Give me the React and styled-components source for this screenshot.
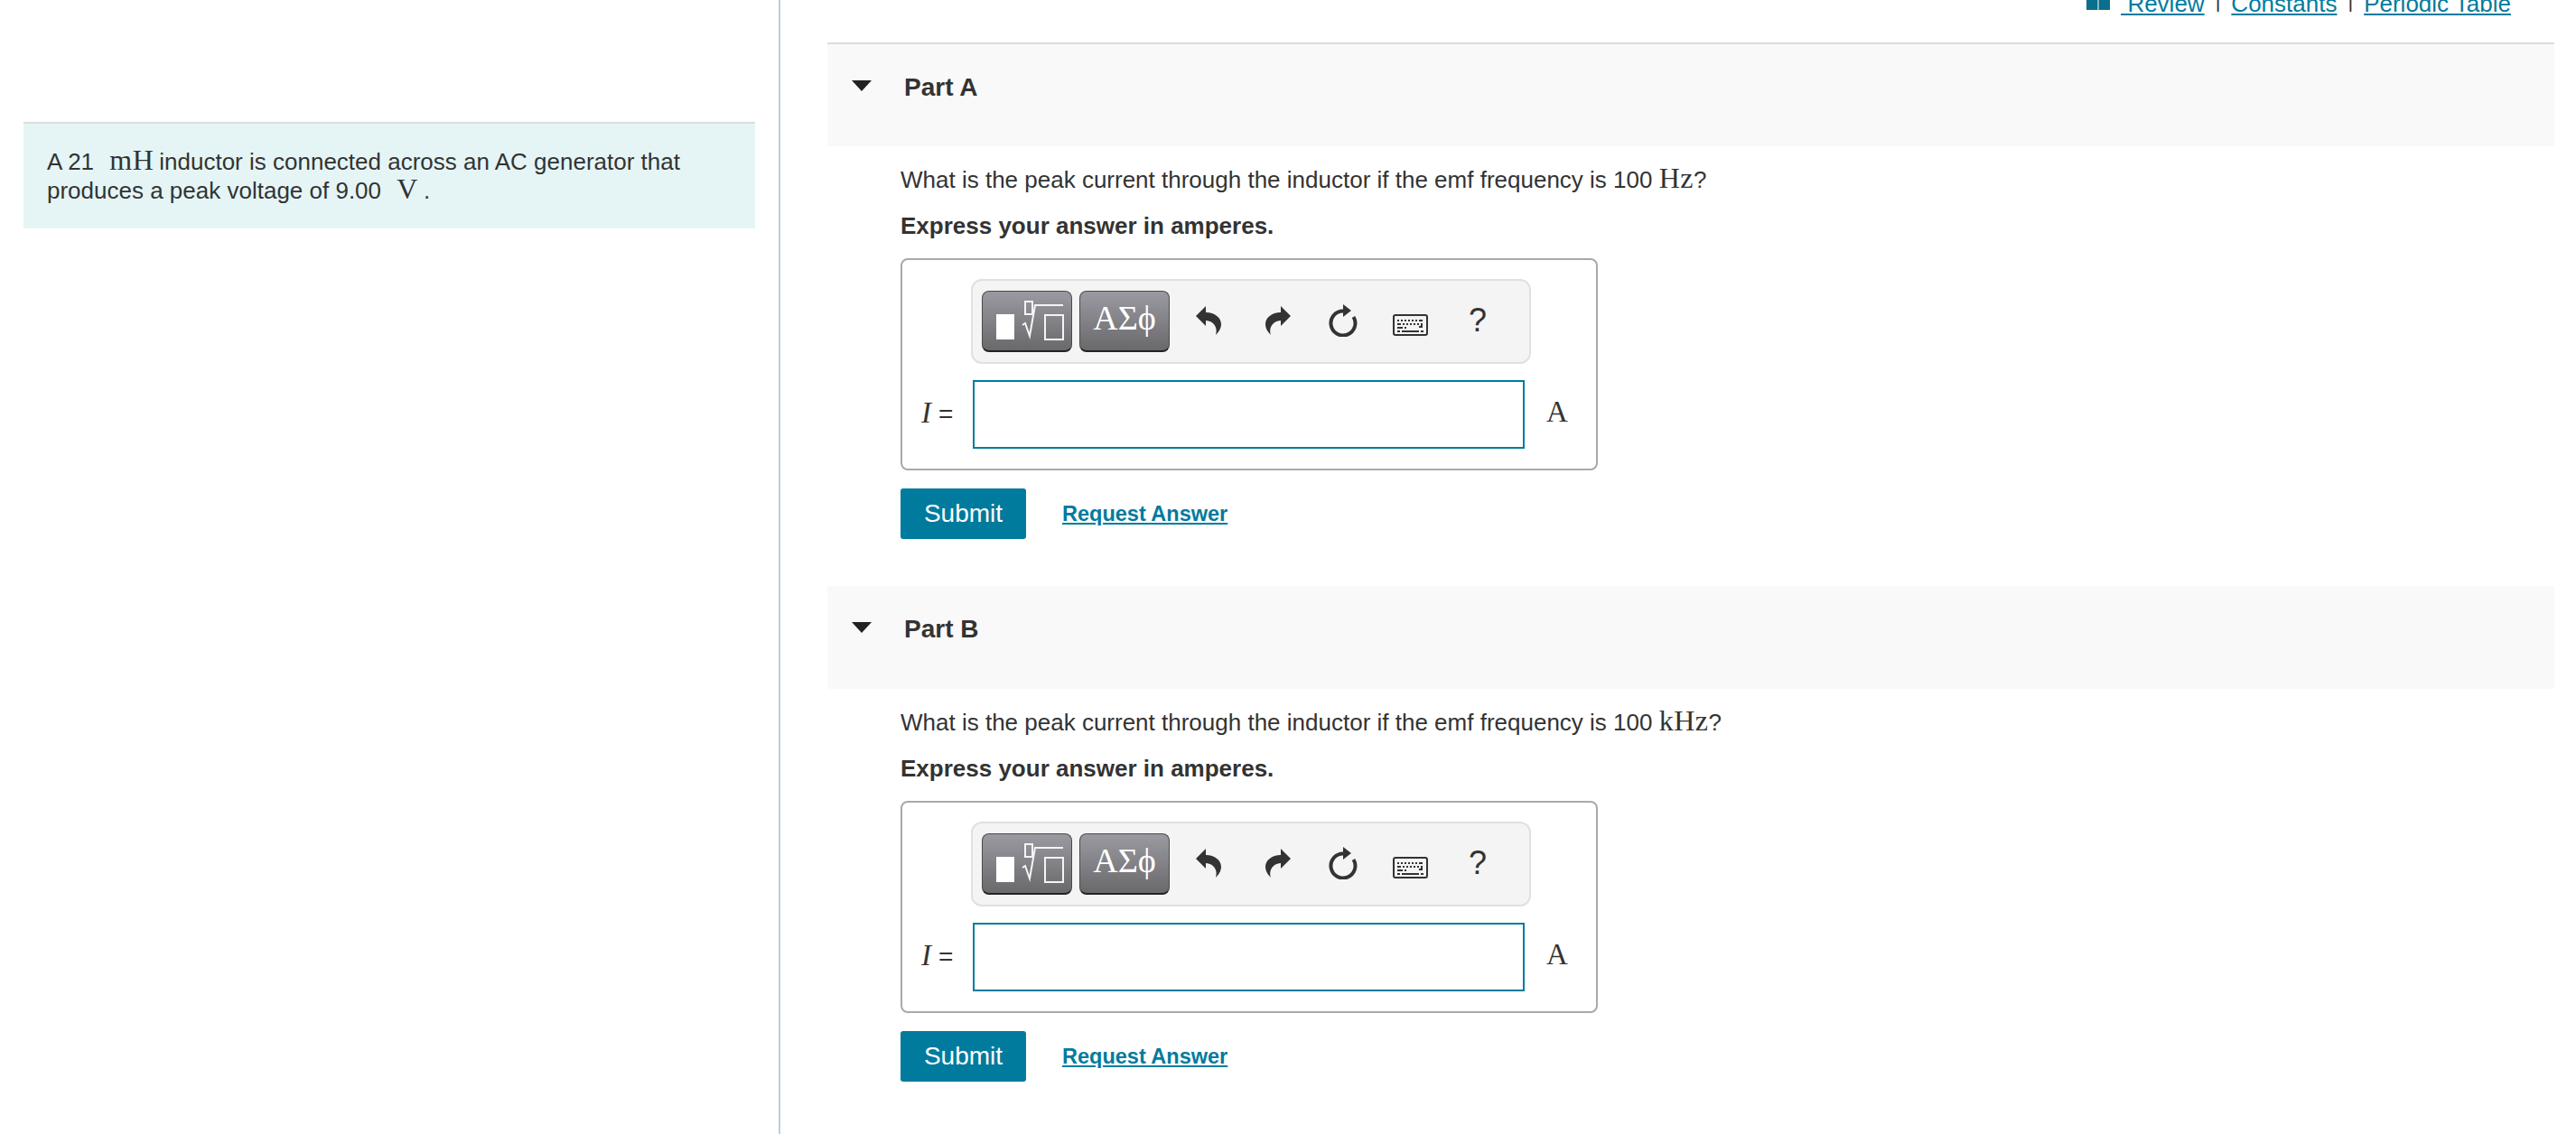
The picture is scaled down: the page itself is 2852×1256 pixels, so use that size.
import React from 'react'
import styled, { createGlobalStyle } from 'styled-components'

const teal = '#007b9e'

const Global = createGlobalStyle`
 html, body {
  margin: 0;
  height: 1256px;
  overflow: hidden;
  background: #fff;
 }
 body {
  font-family: 'Liberation Sans', Arial, sans-serif;
  color: #333;
  font-size: 26px;
 }
`

const Page = styled.div`
 display: flex;
 height: 1276px;
 margin-top: -20px;
`

const Side = styled.aside`
 flex: none;
 width: 864px;
 box-sizing: border-box;
 border-right: 2px solid #b9cfe4;
 padding: 155px 26px 0;
`

const Intro = styled.div`
 background: #e5f5f6;
 border-top: 2px solid #dddddd;
 padding: 26px 26px 0;
 line-height: 32px;
 height: 118px;
 box-sizing: border-box;
`

const Math = styled.span`
 font-family: 'Liberation Serif', 'DejaVu Serif', serif;
 font-size: 32px;
 line-height: 0;
 letter-spacing: 0.5px;
 margin: ${p => p.$spaced ? '0 6px 0 10px' : '0'};
`

const Main = styled.main`
 flex: 1;
 padding: 0 24px 0 52px;
 min-width: 0;
`

const TopLinks = styled.nav`
 display: flex;
 justify-content: flex-end;
 align-items: center;
 height: 48px;
 padding-right: 48px;
 gap: 12px;
 margin-bottom: 19px;
 line-height: 30px;
`

const TopLink = styled.a`
 color: ${teal};
 text-decoration: underline;
 white-space: pre;
`

const Sep = styled.span`
 font-size: 22px;
 padding-bottom: 6px;
`

const PartHeader = styled.div`
 background: #f9f9f9;
 border-top: ${p => p.$first ? '2px solid #dddddd' : 'none'};
 height: ${p => p.$first ? 115 : 114}px;
 display: flex;
 align-items: flex-start;
 padding: 32px 0 0 27px;
 box-sizing: border-box;
 font-weight: 700;
 font-size: 28px;
`

const Caret = styled.span`
 width: 0;
 height: 0;
 border-left: 11px solid transparent;
 border-right: 11px solid transparent;
 border-top: 12px solid #222;
 margin: 8px 36px 0 0;
`

const PartBody = styled.section`
 padding: 21px 0 52px 81px;
`

const Question = styled.p`
 margin: 0;
 line-height: 32px;
`

const Hint = styled.p`
 margin: 19px 0 0;
 line-height: 32px;
 font-weight: 700;
`

const AnswerBox = styled.div`
 margin-top: 20px;
 width: 772px;
 height: 235px;
 box-sizing: border-box;
 border: 2px solid #a9a9a9;
 border-radius: 8px;
 padding: 21px 0 0 76px;
`

const Toolbar = styled.div`
 width: 620px;
 height: 94px;
 box-sizing: border-box;
 background: #f4f4f4;
 border: 2px solid #e0e0e0;
 border-radius: 12px;
 display: flex;
 align-items: center;
 padding-left: 10px;
`

const ToolButton = styled.button`
 width: 100px;
 height: 68px;
 padding: 0 0 8px;
 margin-right: 8px;
 border: 1px solid #4a4a4a;
 border-bottom: 2px solid #222;
 border-radius: 8px;
 background: linear-gradient(#9b9aa2, #69696b);
 color: #fff;
 display: flex;
 align-items: center;
 justify-content: center;
 font-family: 'Liberation Serif', serif;
 font-size: 38px;
`

const GlyphButton = styled(ToolButton)`
 padding: 0;
`

const ToolIcon = styled.span`
 display: flex;
 align-items: center;
 justify-content: center;
 width: ${p => p.$w}px;
 margin-left: ${p => p.$ml}px;
 margin-top: ${p => p.$dy || 0}px;
 color: #333;
 font-size: 36px;
 line-height: 1;
`

const InputRow = styled.div`
 display: flex;
 align-items: center;
 margin-top: 18px;
 margin-left: -76px;
`

const Label = styled.span`
 width: 78px;
 padding: 0 0 4px 21px;
 box-sizing: border-box;
 white-space: nowrap;
 font-size: 28px;
`

const Italic = styled.i`
 font-family: 'Liberation Serif', serif;
 font-size: 33px;
 margin-right: 8px;
`

const Field = styled.input`
 width: 611px;
 height: 76px;
 box-sizing: border-box;
 border: 2px solid ${teal};
 background: #fff;
 border-radius: 0;
 outline: none;
`

const Unit = styled.span`
 font-family: 'Liberation Serif', serif;
 font-size: 33px;
 margin-left: 24px;
 padding-bottom: 6px;
`

const Actions = styled.div`
 display: flex;
 align-items: center;
 margin-top: 20px;
`

const Submit = styled.button`
 width: 139px;
 height: 56px;
 border: none;
 border-radius: 3px;
 background: ${teal};
 color: #fff;
 font-family: inherit;
 font-size: 28px;
 padding: 0;
`

const RequestLink = styled.a`
 margin-left: 40px;
 color: ${teal};
 font-weight: 700;
 font-size: 23.5px;
 text-decoration: underline;
`

const Book = () => (
 <svg width="26" height="16" viewBox="0 0 26 16">
  <path d="M0 0h12.500v15H0zM13.500 0H26v15H13.500z" fill="#0a6f8c" />
 </svg>
)

const TemplatesGlyph = () => (
 <svg width="98" height="65" viewBox="1 1 98 65" fill="none" stroke="#f4f4f4" strokeWidth="2">
  <rect x="16" y="26" width="20" height="28" fill="#fff" stroke="none" />
  <rect x="48" y="12" width="8" height="14" />
  <path d="M45 38l3-2 5 14 6-34h31" />
  <rect x="70" y="27" width="20" height="27" />
 </svg>
)

const Undo = ({ flip }) => (
 <svg width="28" height="32" viewBox="0 0 28 32" style={flip ? { transform: 'scaleX(-1)' } : undefined}>
  <path d="M0 11L11 0v7c10 0 17 6 17 13 0 5-3 9-6 12 2-6 0-15-11-16v6z" fill="#333" />
 </svg>
)

const Reset = () => (
 <svg width="32" height="36" viewBox="0 0 32 36" fill="none">
  <path d="M16 7.500A13.500 13.500 0 1 0 27.500 14" stroke="#333" strokeWidth="4" />
  <path d="M16 0l9 7-9 7z" fill="#333" />
 </svg>
)

const Keyboard = () => (
 <svg width="39" height="24" viewBox="0 0 39 24">
  <rect x="1" y="1" width="37" height="22" rx="2" fill="#f4f4f4" stroke="#333" strokeWidth="2" />
  <path d="M5 6h2v2H5zM9 6h2v2H9zM13 6h2v2h-2zM17 6h2v2h-2zM21 6h2v2h-2zM25 6h2v2h-2zM29 6h4v2h-4zM5 10h4v2H5zM11 10h2v2h-2zM15 10h2v2h-2zM19 10h2v2h-2zM23 10h2v2h-2zM27 10h2v2h-2zM31 10h2v5h-4v-2h2zM5 14h6v2H5zM13 14h2v2h-2zM5 18h3v2H5zM10 18h19v2H10zM31 18h3v2h-3z" fill="#333" />
 </svg>
)

function Part({ name, first, unit }) {
 return (
  <>
   <PartHeader $first={first}>
    <Caret />
    {name}
   </PartHeader>
   <PartBody>
    <Question>
     What is the peak current through the inductor if the emf frequency is 100 <Math>{unit}</Math>?
    </Question>
    <Hint>Express your answer in amperes.</Hint>
    <AnswerBox>
     <Toolbar>
      <GlyphButton aria-label="templates"><TemplatesGlyph /></GlyphButton>
      <ToolButton>ΑΣϕ</ToolButton>
      <ToolIcon $w={28} $ml={21} $dy={-2}><Undo /></ToolIcon>
      <ToolIcon $w={28} $ml={49} $dy={-2}><Undo flip /></ToolIcon>
      <ToolIcon $w={32} $ml={42} $dy={-2}><Reset /></ToolIcon>
      <ToolIcon $w={39} $ml={39} $dy={8}><Keyboard /></ToolIcon>
      <ToolIcon $w={18} $ml={46} $dy={-3}>?</ToolIcon>
     </Toolbar>
     <InputRow>
      <Label><Italic>I</Italic>=</Label>
      <Field />
      <Unit>A</Unit>
     </InputRow>
    </AnswerBox>
    <Actions>
     <Submit>Submit</Submit>
     <RequestLink>Request Answer</RequestLink>
    </Actions>
   </PartBody>
  </>
 )
}

export default function App() {
 return (
  <>
   <Global />
   <Page>
    <Side>
     <Intro>
      A 21 <Math $spaced>mH</Math>inductor is connected across an AC generator that produces a peak voltage of 9.00 <Math $spaced>V</Math>.
     </Intro>
    </Side>
    <Main>
     <TopLinks>
      <Book />
      <TopLink> Review</TopLink>
      <Sep>|</Sep>
      <TopLink>Constants</TopLink>
      <Sep>|</Sep>
      <TopLink>Periodic Table</TopLink>
     </TopLinks>
     <Part name="Part A" first unit="Hz" />
     <Part name="Part B" unit="kHz" />
    </Main>
   </Page>
  </>
 )
}
